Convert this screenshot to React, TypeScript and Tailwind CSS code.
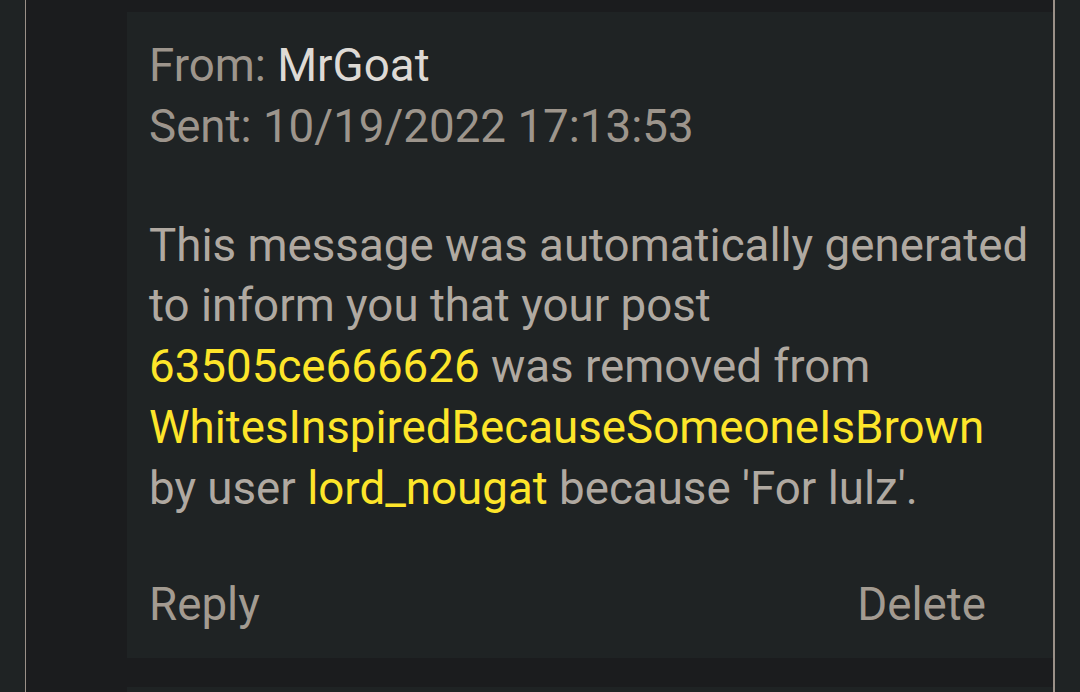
import React from "react";

export default function App() {
  const font = { fontFamily: "Roboto, 'Noto Sans', sans-serif" };
  return (
    <div
      className="w-[1080px] h-[692px] overflow-hidden flex bg-[#1f2324] text-[45.7px] leading-[60.75px]"
      style={font}
    >
      <div className="w-[25px] shrink-0" />
      <div className="w-[1px] shrink-0 bg-[#9a9088]" />
      <div className="w-[1027px] shrink-0 bg-[#1b1c1e] pt-[12px] pl-[101px] flex flex-col gap-[29px]">
        <div className="h-[646px] shrink-0 bg-[#1f2324] pt-[24px] pl-[22px] flex flex-col">
          <div className="text-[#9d958c] whitespace-nowrap">
            From: <span className="text-[#dedad5]">MrGoat</span>
          </div>
          <div className="text-[#9d958c] whitespace-nowrap">Sent: 10/19/2022 17:13:53</div>
          <div className="mt-[58px] text-[#b0a9a1] whitespace-nowrap">
            <div>This message was automatically generated</div>
            <div>to inform you that your post</div>
            <div>
              <span className="text-[#fde52a]">63505ce666626</span> was removed from
            </div>
            <div className="text-[#fde52a]">WhitesInspiredBecauseSomeoneIsBrown</div>
            <div>
              by user <span className="text-[#fde52a]">lord_nougat</span> because 'For lulz'.
            </div>
          </div>
          <div className="mt-[56px] w-[837px] flex justify-between text-[#a39b91]">
            <span>Reply</span>
            <span>Delete</span>
          </div>
        </div>
        <div className="h-[100px] shrink-0 bg-[#1f2324]" />
      </div>
      <div className="w-[2px] shrink-0 bg-[#9a9088]" />
      <div className="flex-1" />
    </div>
  );
}
